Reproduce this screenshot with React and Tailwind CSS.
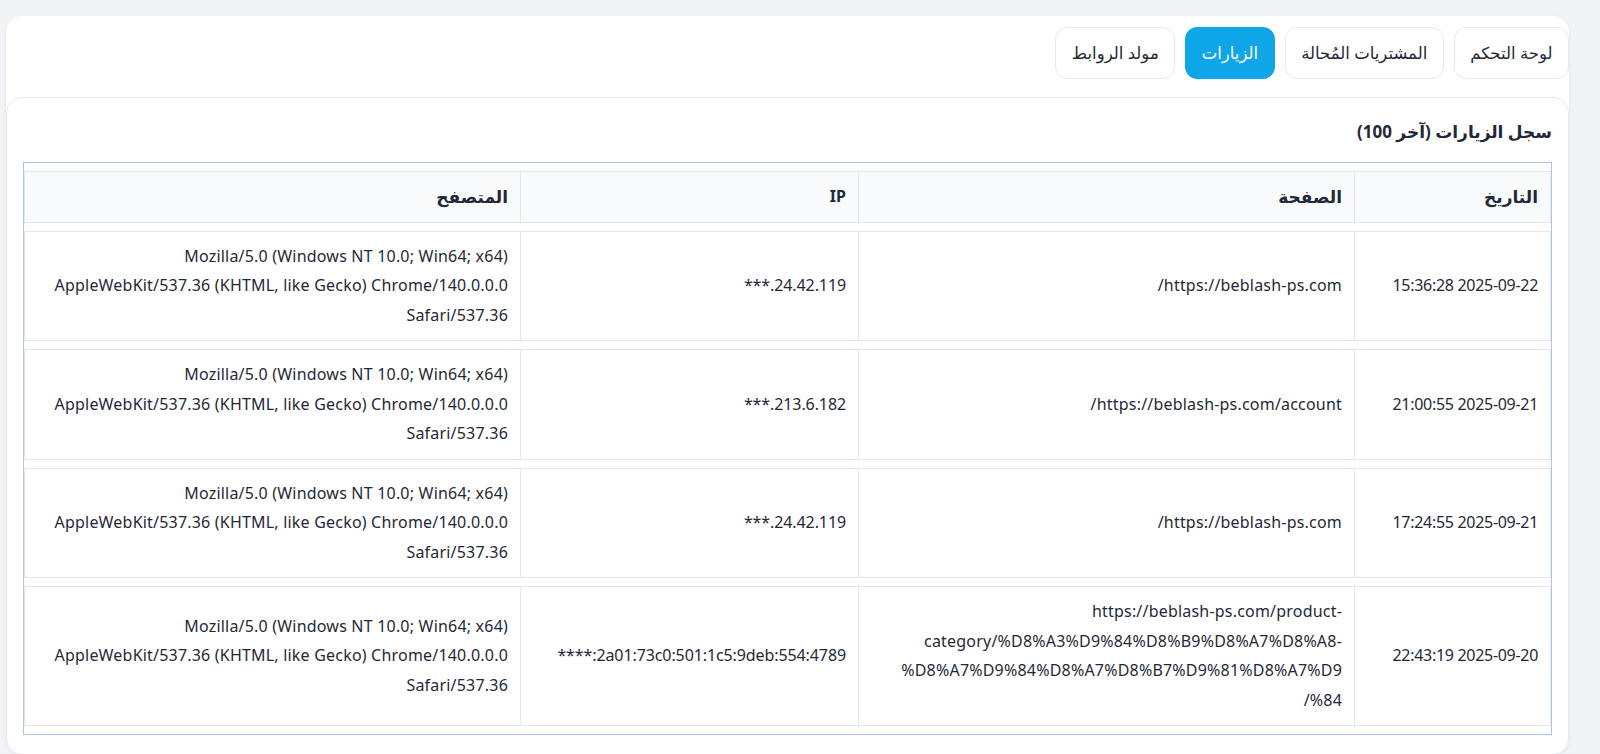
import React from "react";

const UA = [
  "Mozilla/5.0 (Windows NT 10.0; Win64; x64)",
  "AppleWebKit/537.36 (KHTML, like Gecko) Chrome/140.0.0.0",
  "Safari/537.36",
];

const rows = [
  { date: "2025-09-22 15:36:28", page: ["https://beblash-ps.com/"], ip: "24.42.119.***" },
  { date: "2025-09-21 21:00:55", page: ["https://beblash-ps.com/account/"], ip: "213.6.182.***" },
  { date: "2025-09-21 17:24:55", page: ["https://beblash-ps.com/"], ip: "24.42.119.***" },
  {
    date: "2025-09-20 22:43:19",
    page: [
      "https://beblash-ps.com/product-",
      "category/%D8%A3%D9%84%D8%B9%D8%A7%D8%A8-",
      "%D8%A7%D9%84%D8%A7%D8%B7%D9%81%D8%A7%D9",
      "/%84",
    ],
    ip: "2a01:73c0:501:1c5:9deb:554:4789:****",
  },
];

const tabs = [
  { label: "لوحة التحكم", active: false },
  { label: "المشتريات المُحالة", active: false },
  { label: "الزيارات", active: true },
  { label: "مولد الروابط", active: false },
];

const cell =
  "border-y border-l border-[#e1e7ef] px-3 py-[10px] text-right align-middle";

export default function App() {
  return (
    <div
      dir="rtl"
      className="min-h-screen bg-[#f1f3f7] pt-4 pr-[31px] pl-[6px] text-[#1f2937]"
      style={{ fontFamily: '"Noto Sans", "DejaVu Sans", sans-serif' }}
    >
      <div className="rounded-2xl bg-white shadow-[0_1px_4px_rgba(15,23,42,0.06)]">
        <div className="flex gap-[10px] pt-[11px]">
          {tabs.map((t) => (
            <button
              key={t.label}
              className={
                "h-[52px] rounded-xl border px-[15.5px] text-[16.5px] " +
                (t.active
                  ? "border-[#0ea5e9] bg-[#0ea5e9] text-white"
                  : "border-[#e5e9f0] bg-white text-[#1f2937]")
              }
            >
              {t.label}
            </button>
          ))}
        </div>

        <div className="mt-[18px] rounded-2xl border border-[#e5e9f0] bg-white px-4 pt-[19px] pb-[19px]">
          <h2 className="mb-[15px] text-[17px] font-bold leading-[30px]">
            سجل الزيارات (آخر 100)
          </h2>

          <div className="border border-[#a9c6e6]">
            <table className="w-full table-fixed border-separate [border-spacing:0_8px] text-[16px] leading-[29.5px] tracking-[0.2px]">
              <colgroup>
                <col className="w-[197px]" />
                <col className="w-[496px]" />
                <col className="w-[338px]" />
                <col />
              </colgroup>
              <thead>
                <tr className="bg-[#f8fafc]">
                  <th className={cell + " border-r text-[17px] font-bold tracking-normal"}>التاريخ</th>
                  <th className={cell + " text-[17px] font-bold tracking-normal"}>الصفحة</th>
                  <th className={cell + " text-[16px] font-bold tracking-normal"}>IP</th>
                  <th className={cell + " text-[17px] font-bold tracking-normal"}>المتصفح</th>
                </tr>
              </thead>
              <tbody>
                {rows.map((r, i) => (
                  <tr key={i}>
                    <td className={cell + " border-r tracking-[-0.3px]"}>{r.date}</td>
                    <td className={cell}>
                      {r.page.length === 1 ? (
                        r.page[0]
                      ) : (
                        r.page.map((l, j) => (
                          <div key={j} dir="ltr" className="text-right">
                            {l}
                          </div>
                        ))
                      )}
                    </td>
                    <td className={cell + " tracking-[-0.1px]"}>{r.ip}</td>
                    <td className={cell}>
                      {UA.map((l, j) => (
                        <div key={j} dir="ltr" className="text-right">
                          {l}
                        </div>
                      ))}
                    </td>
                  </tr>
                ))}
              </tbody>
            </table>
          </div>
        </div>
      </div>
    </div>
  );
}
